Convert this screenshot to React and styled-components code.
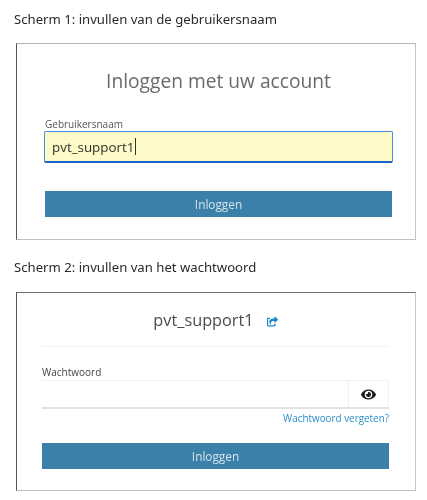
import { createGlobalStyle, styled } from 'styled-components';
import { FaEye, FaShareSquare } from 'react-icons/fa';

const GlobalStyle = createGlobalStyle`
  html, body {
    margin: 0;
    background: #fff;
  }
  body {
    font-family: "Open Sans", "Noto Sans", sans-serif;
  }
`;

function App() {
  return (
    <>
      <GlobalStyle />
      <Page>
        <Caption>Scherm 1: invullen van de gebruikersnaam</Caption>
        <Card $top={15} $height={197} $left={27} $right={22} $edge="#b4b4b4">
          <Title>Inloggen met uw account</Title>
          <Field>
            <SmallLabel $indent={1}>Gebruikersnaam</SmallLabel>
            <UsernameInput>
              pvt_support1<Caret />
            </UsernameInput>
          </Field>
          <SubmitButton $top={28} $inset={1}>Inloggen</SubmitButton>
        </Card>

        <Caption $top={18}>Scherm 2: invullen van het wachtwoord</Caption>
        <Card $top={16} $height={199} $left={25} $right={26} $edge="#707070">
          <UserRow>
            <UserName>pvt_support1</UserName>
            <ShareIcon><FaShareSquare /></ShareIcon>
          </UserRow>
          <Divider />
          <Field $top={19}>
            <SmallLabel $dark>Wachtwoord</SmallLabel>
            <PasswordRow>
              <PasswordInput />
              <EyeCell><FaEye /></EyeCell>
            </PasswordRow>
          </Field>
          <ForgotLink>Wachtwoord vergeten?</ForgotLink>
          <SubmitButton $top={18}>Inloggen</SubmitButton>
        </Card>
      </Page>
    </>
  );
}

const Page = styled.div`
  width: 427px;
  height: 500px;
  padding: 10px 11px 0 16px;
  box-sizing: border-box;
  overflow: hidden;
  filter: blur(0.35px);
`;

const Caption = styled.div`
  margin-top: ${(p) => p.$top || 0}px;
  margin-left: -2px;
  font-family: "Noto Sans", sans-serif;
  font-size: 13.15px;
  line-height: 18px;
  color: #2a2a2a;
`;

const Card = styled.section`
  margin-top: ${(p) => p.$top}px;
  width: 400px;
  height: ${(p) => p.$height}px;
  box-sizing: border-box;
  padding: 0 ${(p) => p.$right}px 0 ${(p) => p.$left}px;
  background: #fff;
  border: 1px solid ${(p) => p.$edge};
  border-right-color: #c4c4c4;
  border-bottom-color: #c0c0c0;
  border-left-color: #555;
`;

const Title = styled.h1`
  margin: 19px 0 0;
  font-size: 19.2px;
  font-weight: 400;
  line-height: 36px;
  text-align: center;
  color: #6a6a6a;
`;

const Field = styled.div`
  margin-top: ${(p) => p.$top ?? 19}px;
`;

const SmallLabel = styled.label`
  display: block;
  padding-left: ${(p) => p.$indent || 0}px;
  font-size: 10px;
  line-height: 12px;
  color: ${(p) => (p.$dark ? '#444' : '#555')};
`;

const UsernameInput = styled.div`
  display: flex;
  align-items: center;
  height: 32px;
  margin-top: 1px;
  box-sizing: border-box;
  padding-left: 7px;
  font-size: 13.4px;
  font-weight: 500;
  color: #2e2e2e;
  background: #fffbc8;
  border: 1px solid #4a8ae0;
  border-bottom: 2px solid #1b62c8;
  border-radius: 2px;
`;

const Caret = styled.span`
  width: 1px;
  height: 17px;
  margin-left: 1px;
  background: #333;
`;

const SubmitButton = styled.button`
  display: block;
  width: calc(100% - ${(p) => (p.$inset || 0) * 2}px);
  height: 26px;
  margin: ${(p) => p.$top}px ${(p) => p.$inset || 0}px 0;
  padding: 0;
  border: 0;
  font-family: inherit;
  font-size: 11.8px;
  color: #d5e4ec;
  background: #3a80a8;
`;

const UserRow = styled.div`
  display: flex;
  align-items: center;
  justify-content: center;
  gap: 13px;
  height: 28px;
  margin-top: 13px;
`;

const UserName = styled.span`
  font-size: 16.3px;
  color: #4c4c4c;
`;

const ShareIcon = styled.span`
  display: flex;
  margin-top: 3px;
  font-size: 11px;
  color: #1d86cc;
`;

const Divider = styled.div`
  height: 1px;
  margin-top: 12px;
  background: #f1f1f1;
`;

const PasswordRow = styled.div`
  display: flex;
  height: 29px;
  margin-top: 2px;
  box-sizing: border-box;
  border-top: 1px solid #f3f3f3;
  border-bottom: 2px solid #e2e2e2;
`;

const PasswordInput = styled.div`
  flex: 1;
`;

const EyeCell = styled.div`
  display: flex;
  align-items: center;
  justify-content: center;
  width: 39px;
  font-size: 15px;
  color: #1c1c1c;
  border-left: 1px solid #f1f1f1;
  border-right: 1px solid #f3f3f3;
`;

const ForgotLink = styled.a`
  display: block;
  margin-top: 2px;
  font-size: 9.9px;
  font-weight: 500;
  line-height: 14px;
  text-align: right;
  color: #2a8ec8;
`;

export default App;
